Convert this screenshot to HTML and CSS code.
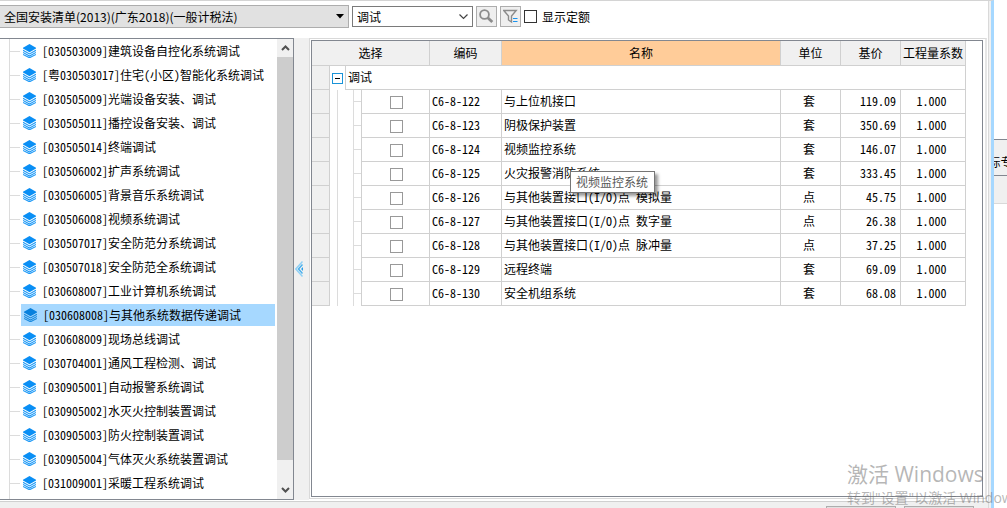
FILE: index.html
```html
<!DOCTYPE html>
<html lang="zh-CN">
<head>
<meta charset="utf-8">
<title>清单查询</title>
<link rel="stylesheet" href="styles.css">
</head>
<body>
<svg class="defs" aria-hidden="true">
  <symbol id="layers" viewBox="0 0 13 14">
    <path d="M6.500 0 13 3.800v.8L6.500 8.300 0 4.600v-.8Z" fill="#0a8ff5"/>
    <path d="M0 6.300l6.500 3.600L13 6.300M0 8.400 6.500 12 13 8.400M0 10.400l6.500 3.400 6.500-3.400" fill="none" stroke="#1e9af7" stroke-width="1.100"/>
  </symbol>
</svg>
<div class="app">
  <div class="window">
    <div class="toolbar">
      <div class="field library">
        <select aria-label="清单库"><option>全国安装清单(2013)(广东2018)(一般计税法)</option></select>
        <svg class="arrow" width="8" height="5" viewBox="0 0 8 5"><path d="M0 0h8L4 4.500Z" fill="#000"/></svg>
      </div>
      <div class="field keyword">
        <select aria-label="关键字"><option>调试</option></select>
        <svg class="arrow" width="9" height="6" viewBox="0 0 9 6"><path d="M.5.5l4 4 4-4" fill="none" stroke="#444" stroke-width="1.200"/></svg>
      </div>
      <button class="tool" type="button" aria-label="查找"><svg width="15" height="15" viewBox="0 0 15 15"><circle cx="5.500" cy="5.500" r="4.400" fill="none" stroke="#8c8c8c" stroke-width="1.800"/><path d="M8.500 8.500l4.800 4.500" stroke="#8c8c8c" stroke-width="2.800"/></svg></button>
      <button class="tool" type="button" aria-label="筛选"><svg width="15" height="15" viewBox="0 0 15 15"><path d="M.8 1.500h12.400L8.500 7v6L5.500 11V7Z" fill="none" stroke="#8c8c8c" stroke-width="1.400"/><path d="M10 9.500h4.500M10 12.500h4.500" stroke="#1993ee" stroke-width="1.200"/></svg></button>
      <label class="quota"><input type="checkbox"><span>显示定额</span></label>
    </div>
    <div class="panes">
      <div class="tree-pane">
        <ul class="tree">
          <li><svg><use href="#layers"/></svg><span>[030503009]建筑设备自控化系统调试</span></li>
          <li><svg><use href="#layers"/></svg><span>[粤030503017]住宅(小区)智能化系统调试</span></li>
          <li><svg><use href="#layers"/></svg><span>[030505009]光端设备安装、调试</span></li>
          <li><svg><use href="#layers"/></svg><span>[030505011]播控设备安装、调试</span></li>
          <li><svg><use href="#layers"/></svg><span>[030505014]终端调试</span></li>
          <li><svg><use href="#layers"/></svg><span>[030506002]扩声系统调试</span></li>
          <li><svg><use href="#layers"/></svg><span>[030506005]背景音乐系统调试</span></li>
          <li><svg><use href="#layers"/></svg><span>[030506008]视频系统调试</span></li>
          <li><svg><use href="#layers"/></svg><span>[030507017]安全防范分系统调试</span></li>
          <li><svg><use href="#layers"/></svg><span>[030507018]安全防范全系统调试</span></li>
          <li><svg><use href="#layers"/></svg><span>[030608007]工业计算机系统调试</span></li>
          <li class="selected"><svg><use href="#layers"/></svg><span>[030608008]与其他系统数据传递调试</span></li>
          <li><svg><use href="#layers"/></svg><span>[030608009]现场总线调试</span></li>
          <li><svg><use href="#layers"/></svg><span>[030704001]通风工程检测、调试</span></li>
          <li><svg><use href="#layers"/></svg><span>[030905001]自动报警系统调试</span></li>
          <li><svg><use href="#layers"/></svg><span>[030905002]水灭火控制装置调试</span></li>
          <li><svg><use href="#layers"/></svg><span>[030905003]防火控制装置调试</span></li>
          <li><svg><use href="#layers"/></svg><span>[030905004]气体灭火系统装置调试</span></li>
          <li><svg><use href="#layers"/></svg><span>[031009001]采暖工程系统调试</span></li>
        </ul>
        <div class="scrollbar">
          <svg width="9" height="6" viewBox="0 0 9 6"><path d="M1 5l3.500-3.500L8 5" fill="none" stroke="#505050" stroke-width="2"/></svg>
          <div class="thumb"></div>
          <svg width="9" height="6" viewBox="0 0 9 6"><path d="M1 1l3.500 3.500L8 1" fill="none" stroke="#505050" stroke-width="2"/></svg>
        </div>
      </div>
      <div class="splitter"><svg width="8" height="16" viewBox="0 0 8 16"><path d="M7.500 .5.800 8l6.700 7.500" fill="none" stroke="#8fd0f5" stroke-width="1.500"/><path d="M7.500 3.500 3.500 8l4 4.500" fill="none" stroke="#48b0ee" stroke-width="1.500"/><path d="M8 6v4L6 8Z" fill="#2a9fe8"/></svg></div>
      <div class="grid-frame">
        <div class="grid-pane">
          <table>
            <colgroup><col class="c-row"><col class="c-tree"><col class="c-check"><col class="c-code"><col><col class="c-unit"><col class="c-unit"><col class="c-factor"></colgroup>
            <thead><tr><th colspan="3">选择</th><th>编码</th><th class="active">名称</th><th>单位</th><th>基价</th><th>工程量系数</th></tr></thead>
            <tbody>
              <tr class="group"><td class="row-head"></td><td colspan="7"><div class="group-cell"><button type="button" aria-label="折叠"></button><span>调试</span></div></td></tr>
              <tr><td class="row-head"></td><td class="branch"></td><td class="check"><input type="checkbox" aria-label="C6-8-122"></td><td>C6-8-122</td><td>与上位机接口</td><td class="unit">套</td><td class="price">119.09</td><td class="factor">1.000</td></tr>
              <tr><td class="row-head"></td><td class="branch"></td><td class="check"><input type="checkbox" aria-label="C6-8-123"></td><td>C6-8-123</td><td>阴极保护装置</td><td class="unit">套</td><td class="price">350.69</td><td class="factor">1.000</td></tr>
              <tr><td class="row-head"></td><td class="branch"></td><td class="check"><input type="checkbox" aria-label="C6-8-124"></td><td>C6-8-124</td><td>视频监控系统</td><td class="unit">套</td><td class="price">146.07</td><td class="factor">1.000</td></tr>
              <tr><td class="row-head"></td><td class="branch"></td><td class="check"><input type="checkbox" aria-label="C6-8-125"></td><td>C6-8-125</td><td class="tip-host">火灾报警消防系统<div class="tooltip" role="tooltip">视频监控系统</div></td><td class="unit">套</td><td class="price">333.45</td><td class="factor">1.000</td></tr>
              <tr><td class="row-head"></td><td class="branch"></td><td class="check"><input type="checkbox" aria-label="C6-8-126"></td><td>C6-8-126</td><td>与其他装置接口(I/O)点 模拟量</td><td class="unit">点</td><td class="price">45.75</td><td class="factor">1.000</td></tr>
              <tr><td class="row-head"></td><td class="branch"></td><td class="check"><input type="checkbox" aria-label="C6-8-127"></td><td>C6-8-127</td><td>与其他装置接口(I/O)点 数字量</td><td class="unit">点</td><td class="price">26.38</td><td class="factor">1.000</td></tr>
              <tr><td class="row-head"></td><td class="branch"></td><td class="check"><input type="checkbox" aria-label="C6-8-128"></td><td>C6-8-128</td><td>与其他装置接口(I/O)点 脉冲量</td><td class="unit">点</td><td class="price">37.25</td><td class="factor">1.000</td></tr>
              <tr><td class="row-head"></td><td class="branch"></td><td class="check"><input type="checkbox" aria-label="C6-8-129"></td><td>C6-8-129</td><td>远程终端</td><td class="unit">套</td><td class="price">69.09</td><td class="factor">1.000</td></tr>
              <tr><td class="row-head"></td><td class="branch"></td><td class="check"><input type="checkbox" aria-label="C6-8-130"></td><td>C6-8-130</td><td>安全机组系统</td><td class="unit">套</td><td class="price">68.08</td><td class="factor">1.000</td></tr>
            </tbody>
          </table>
        </div>
      </div>
    </div>
    <div class="footer"><button type="button" aria-label="插入"></button><button type="button" aria-label="替换"></button></div>
  </div>
  <div class="behind"><div class="tab">标专</div><div class="bar"></div></div>
  <div class="watermark"><p class="big">激活 Windows</p><p>转到"设置"以激活 Windows。</p></div>
</div>
</body>
</html>
```
FILE: styles.css
```css
* { box-sizing: border-box; }
body {
  margin: 0;
  font: 12px/16px "Noto Sans CJK SC", sans-serif;
  color: #000;
  background: #fff;
}
.defs { position: absolute; width: 0; height: 0; }
.app { position: relative; display: flex; height: 100vh; overflow: hidden; }
.window {
  flex: 1;
  min-width: 0;
  display: flex;
  flex-direction: column;
  padding-right: 3px;
  border-top: 1px solid #d4d4d4;
  border-right: 3px solid #a6d8ff;
  box-shadow: inset -2px 0 #f0f0f0, inset -3px 0 #d9d9d9;
}

.toolbar {
  display: flex;
  align-items: center;
  gap: 3px;
  height: 31px;
  flex: none;
}
.field { position: relative; display: flex; align-items: center; }
.field select {
  appearance: none;
  width: 100%;
  height: 21px;
  padding: 0 4px;
  border: 1px solid #7a7a7a;
  border-radius: 0;
  background: #fff;
  font: inherit;
  color: #000;
}
.library { width: 349px; }
.library select { height: 23px; border-color: #adadad; border-left: 0; background: #e1e1e1; }
.keyword { width: 121px; }
.field .arrow { position: absolute; right: 5px; pointer-events: none; }
.tool {
  display: flex;
  align-items: center;
  justify-content: center;
  width: 21px;
  height: 21px;
  padding: 0;
  border: 1px solid #adadad;
  background: #efefef;
}
.quota { display: flex; align-items: center; gap: 5px; }
input[type="checkbox"] {
  appearance: none;
  width: 13px;
  height: 13px;
  margin: 0;
  border: 1px solid #333;
  background: #fff;
}

.panes { flex: 1; min-height: 0; display: flex; padding-top: 6px; }
.tree-pane {
  display: flex;
  width: 294px;
  margin-bottom: 1px;
  border: 1px solid #828790;
  border-left: 0;
  overflow: hidden;
}
.tree {
  flex: 1;
  margin: 0 0 0 9px;
  padding: 0;
  list-style: none;
  border-left: 1px solid #dcdcdc;
  font-feature-settings: "hwid";
}
.tree li {
  display: flex;
  align-items: center;
  height: 24px;
  white-space: nowrap;
}
.tree li::before { content: ""; width: 10px; margin-right: 3px; border-top: 1px solid #dcdcdc; }
.tree svg { width: 13px; height: 14px; margin-right: 6px; }
.tree li.selected {
  background: linear-gradient(#a6d8ff, #a6d8ff) 11px 1px / calc(100% - 13px) 22px no-repeat;
}
.tree li.selected svg { margin-left: 1px; filter: brightness(.9); }
.scrollbar {
  display: flex;
  flex-direction: column;
  align-items: center;
  gap: 6px;
  width: 16px;
  padding: 6px 0;
  background: #f0f0f0;
}
.scrollbar .thumb { flex: 1; width: 100%; margin-bottom: 21px; background: #cdcdcd; }
.splitter {
  display: flex;
  align-items: center;
  width: 15px;
  margin-bottom: 1px;
  padding-left: 1px;
  background: #f0f0f0;
}

.grid-frame {
  flex: 1;
  min-width: 0;
  display: flex;
  margin: 0 1px 2px 0;
  padding: 1px 2px 1px 1px;
  border: 1px solid #d9d9d9;
  border-right: 2px solid #e6e6e6;
}
.grid-pane { flex: 1; min-width: 0; padding-right: 16px; border: 1px solid #828790; }
table {
  width: 100%;
  border-collapse: separate;
  border-spacing: 0;
  table-layout: fixed;
  font-feature-settings: "hwid";
}
.c-row { width: 18px; }
.c-tree { width: 32px; }
.c-check { width: 68px; }
.c-code { width: 72px; }
.c-unit { width: 60px; }
.c-factor { width: 65px; }
th, td {
  height: 24px;
  padding: 0 2px 2px;
  border-right: 1px solid #d0d0d0;
  border-bottom: 1px solid #d0d0d0;
  font-weight: normal;
  text-align: left;
  white-space: nowrap;
}
th { height: 25px; padding: 0; text-align: center; background: #f0f0f0; }
th.active { background: #ffcc99; }
td.row-head { background: #f0f0f0; }
.unit { text-align: center; padding-right: 5px; }
.price { text-align: right; padding-right: 4px; }
.factor { text-align: center; padding-right: 5px; }
.check { padding: 1px 0 0 2px; }
td input[type="checkbox"] { display: block; margin: 0 auto; border-color: #999; }
.branch {
  border-bottom: 0;
  background:
    linear-gradient(#dcdcdc, #dcdcdc) 7px 0 / 1px 100% no-repeat,
    linear-gradient(#dcdcdc, #dcdcdc) 23px 0 / 1px 100% no-repeat,
    linear-gradient(#dcdcdc, #dcdcdc) 23px 11px / 8px 1px no-repeat;
}
.group td:last-child { padding: 0; border-bottom: 0; }
.group-cell { display: flex; align-items: center; height: 24px; }
.group-cell button {
  flex: none;
  width: 11px;
  height: 11px;
  margin: 0 2px;
  padding: 0;
  border: 1px solid #1993d8;
  background: linear-gradient(#000, #000) center / 5px 1px no-repeat #fff;
}
.group-cell span {
  flex: 1;
  height: 24px;
  padding: 3px 2px;
  border-left: 1px solid #d0d0d0;
  border-bottom: 1px solid #d0d0d0;
}
.tip-host { position: relative; }
.tooltip {
  position: absolute;
  z-index: 1;
  left: 68px;
  top: 9px;
  padding: 2px 6px 2px 5px;
  border: 1px solid #767676;
  background: #fff;
  color: #575757;
  box-shadow: 3px 3px 3px rgba(0, 0, 0, .4);
}

.footer {
  display: flex;
  flex: none;
  justify-content: flex-end;
  align-items: flex-end;
  gap: 8px;
  height: 7px;
  padding-right: 14px;
  border-top: 1px solid #d0d0d0;
  background: #f0f0f0;
  overflow: hidden;
}
.footer button { width: 70px; height: 2px; padding: 0; border: 1px solid #adadad; border-bottom: 0; background: #e1e1e1; }

.behind { width: 13px; padding-top: 139px; overflow: hidden; }
.tab {
  display: flex;
  justify-content: center;
  height: 37px;
  padding-top: 14px;
  border-top: 1px solid #828790;
  border-bottom: 1px solid #828790;
  background: #f0f0f0;
  white-space: nowrap;
}
.bar { height: 28px; border-bottom: 1px solid #d9d9d9; background: #f0f0f0; }
.watermark {
  position: absolute;
  left: calc(100% - 160px);
  bottom: 0;
  color: rgba(110, 110, 110, .5);
  font: 14px/20px "Open Sans", "Noto Sans CJK SC", sans-serif;
  white-space: nowrap;
  pointer-events: none;
}
.watermark p { margin: 0; }
.watermark .big { font-size: 21px; line-height: 28px; }
```
